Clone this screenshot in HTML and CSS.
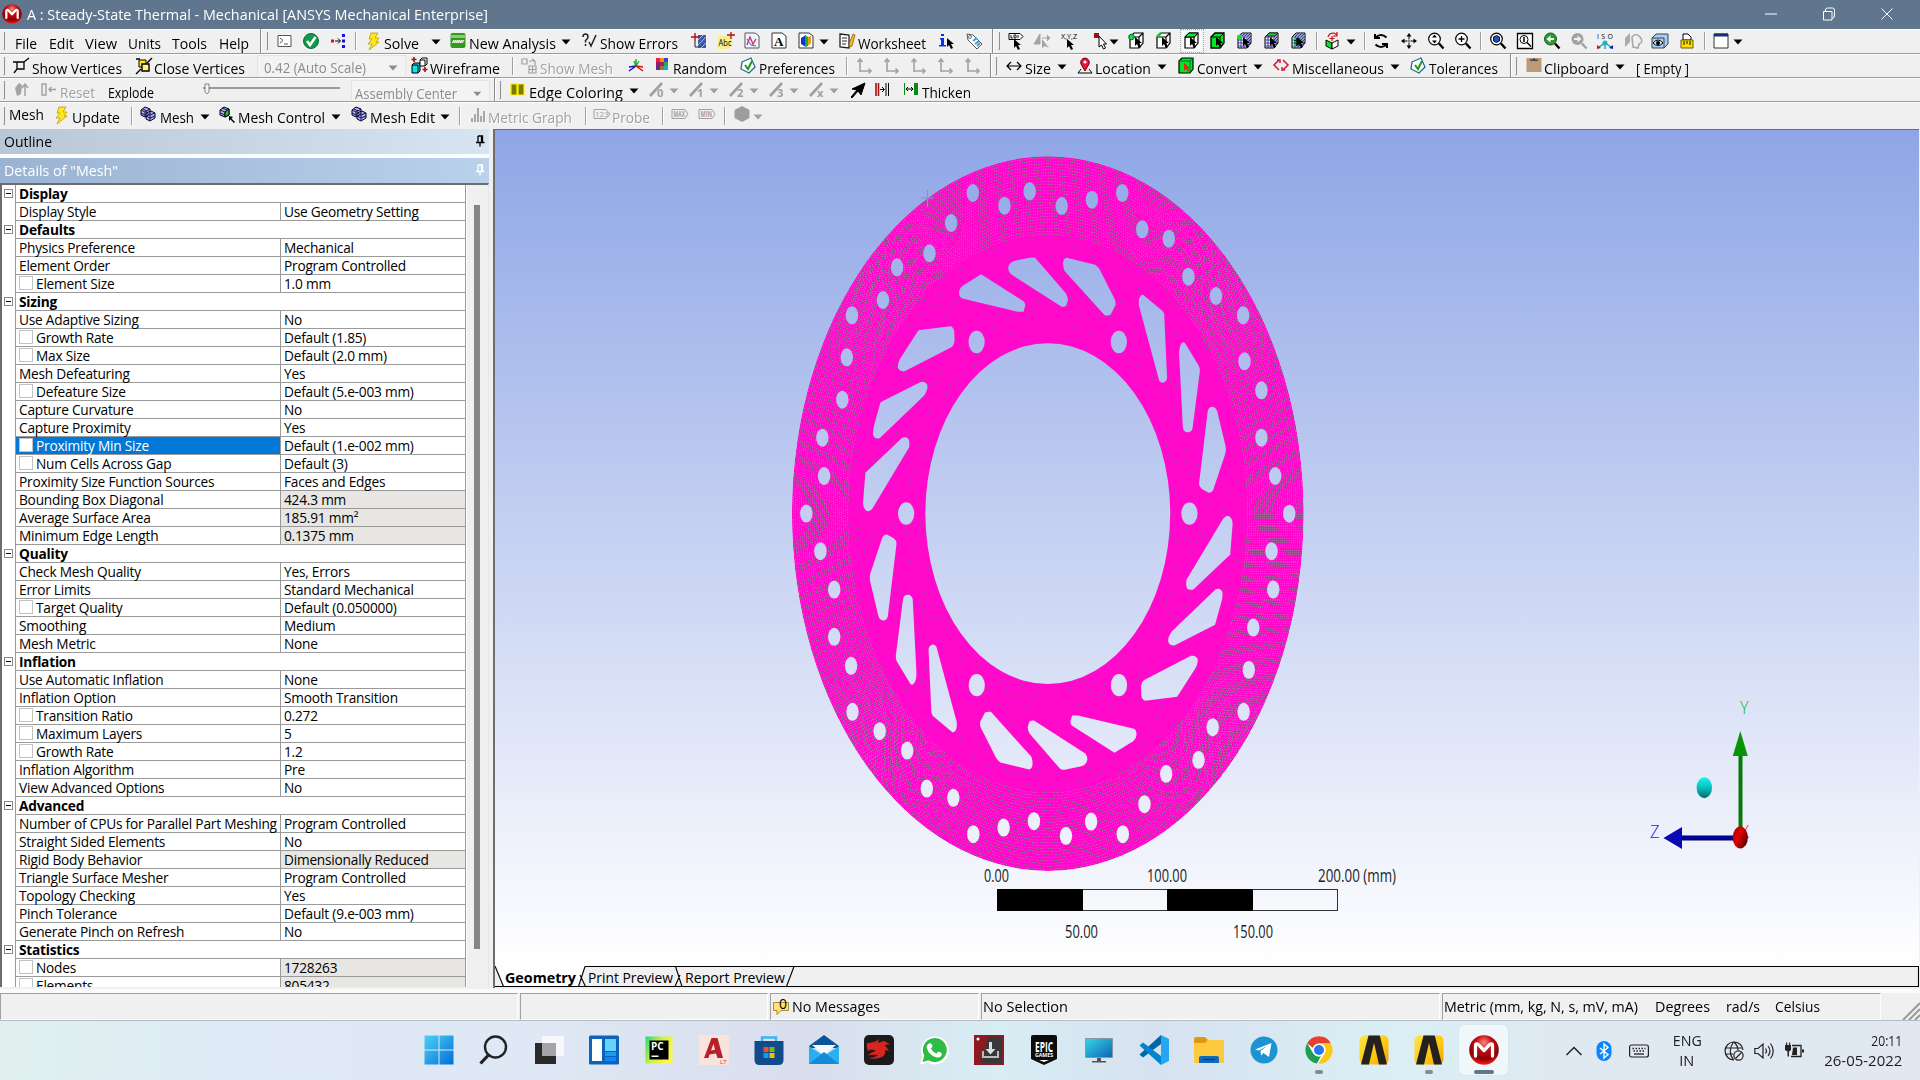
FILE: index.html
```html
<!DOCTYPE html>
<html lang="en">
<head>
<meta charset="utf-8">
<title>A : Steady-State Thermal - Mechanical [ANSYS Mechanical Enterprise]</title>
<link rel="stylesheet" href="styles.css">
</head>
<body>
<svg class="defs" width="0" height="0">
  <defs>
    <radialGradient id="redball" cx=".5" cy=".25" r=".75"><stop offset="0" stop-color="#ff8a80"/><stop offset=".35" stop-color="#c40d12"/><stop offset=".75" stop-color="#8d0005"/><stop offset="1" stop-color="#ff1a1a"/></radialGradient>
    <linearGradient id="ansysbg" x1="0" y1="0" x2="1" y2="1"><stop offset="0" stop-color="#ffe34a"/><stop offset=".6" stop-color="#fdc80c"/><stop offset="1" stop-color="#f59a13"/></linearGradient>
    <symbol id="caret" viewBox="0 0 12 20"><path d="M1.500 7.500h9L6 12.500z"/></symbol>
    <symbol id="bolt" viewBox="0 0 20 20"><path d="M7 2h7l-3 5h4l-3 4h3L5 19l3-6H4l4-5H5z" fill="#ffe81a" stroke="#c29a00" stroke-width=".8"/></symbol>
    <symbol id="cube" viewBox="0 0 20 20"><path d="M3 6l4-4h9v10l-4 5H3z" fill="#fff" stroke="#000" stroke-width="1.200"/><path d="M3 6h9v11M12 6l4-4" fill="none" stroke="#000" stroke-width="1.200"/></symbol>
    <symbol id="cursor" viewBox="0 0 20 20"><path d="M8 6v9l2-2 2 4 2-1-2-4h3z" fill="#000"/></symbol>
    <symbol id="gridcube" viewBox="0 0 20 20"><path d="M3 6l4-4h9v10l-4 5H3z" fill="#e8e8ff" stroke="#000"/><path d="M3 9h9l4-4M3 12h9l4-4M3 15h9l4-4M5 4h9v10M6 6v11M9 6v11M12 6v11M3 6h9l4-4M6 6l4-4M9 6l4-4" stroke="#22228a" fill="none" stroke-width=".8"/></symbol>
    <symbol id="lens" viewBox="0 0 20 20"><circle cx="8.500" cy="8" r="5.800" fill="#fff" stroke="#000" stroke-width="1.200"/><path d="M13 12.500l4.500 5" stroke="#000" stroke-width="2.400"/></symbol>
    <symbol id="meshcube" viewBox="0 0 20 20"><path d="M3 5l4-3 5 2v5l-5 3-4-2zM8 8l5-2 4 2v5l-5 3-4-2z" fill="#aeb2ff" stroke="#000"/><path d="M3 5l4 2v5M7 7l5-3M8 8l4 2 5-2M12 10v6M5 4l4 2M3 8l4 2M8 11l4 2 5-2" fill="none" stroke="#121250"/></symbol>
    <symbol id="axes" viewBox="0 0 20 20"><path d="M6 3v13M3.500 6L6 3l2.500 3M6 15h11M14.500 12.500L17 15l-2.500 2.500" fill="none" stroke="#a3a3a3" stroke-width="1.600"/></symbol>
    <symbol id="tick" viewBox="0 0 20 20"><path d="M4 6l9-4 4 9-6 6-8-4z" fill="#fff" stroke="#2a6a92" stroke-width="1.300"/><path d="M7 9l3 4 4-8" fill="none" stroke="#16a016" stroke-width="2"/></symbol>
    <symbol id="slash" viewBox="0 0 20 20"><path d="M3 16L15 3" stroke="#a0a0a0" stroke-width="2.600"/></symbol>
    <symbol id="pin" viewBox="0 0 10 12"><path d="M3 1h4.500v6M3 1v6M1 7.500h8.500M5 8v3.500M6.500 1v6" fill="none" stroke="currentColor" stroke-width="1.300"/></symbol>
    <symbol id="mball" viewBox="0 0 30 30"><circle cx="15" cy="15" r="14.800" fill="url(#redball)"/><path d="M6.500 21V10.500c0-2 2.200-2 3.200-.6L15 15.500l5.300-5.600c1-1.400 3.200-1.400 3.200.6V21" fill="none" stroke="#fff" stroke-width="3.300" stroke-linecap="round" stroke-linejoin="round"/></symbol>
    <symbol id="ansys" viewBox="0 0 30 30"><rect x=".5" y=".5" width="29" height="29" rx="5" fill="url(#ansysbg)"/><path d="M9.500.5h11.300L28 29.500h-8L15 8 10 29.500H2z" fill="#25211e"/></symbol>
  </defs>
</svg>
<div class="window">
  <header class="titlebar">
    <svg class="logo" viewBox="0 0 30 30"><use href="#mball"/></svg>
    <span class="t caption" data-w="461">A : Steady-State Thermal - Mechanical [ANSYS Mechanical Enterprise]</span>
    <span class="sysbuttons">
      <svg viewBox="0 0 14 14"><path d="M1 7h12"/></svg>
      <svg viewBox="0 0 14 14"><path d="M1.500 4.500h8.500v8.500H1.500zM3.500 4.500V3q0-2 2-2h5q2 0 2 2v6q0 2-2 2"/></svg>
      <svg viewBox="0 0 14 14"><path d="M1.500 1.500l11 11M12.500 1.500l-11 11"/></svg>
    </span>
  </header>

  <nav class="bar bar-menu">
    <i class="grip"></i>
    <span class="t" data-w="22">File</span><span class="t" data-w="25">Edit</span><span class="t" data-w="32">View</span><span class="t" data-w="33">Units</span><span class="t" data-w="35">Tools</span><span class="t" data-w="30">Help</span>
    <i class="end"></i><i class="grip"></i>
    <svg class="i" viewBox="0 0 20 20"><path d="M4 4.500h13v11H4z" fill="#fff" stroke="#555"/><path d="M6 7l3 2.500L6 12M10 13h4" fill="none" stroke="#555"/></svg>
    <svg class="i" viewBox="0 0 20 20"><circle cx="10" cy="10" r="7.500" fill="#12994a" stroke="#0b6e33"/><path d="M6 10l3 4 5.500-8" fill="none" stroke="#fff" stroke-width="2.500"/></svg>
    <svg class="i" viewBox="0 0 20 20"><path d="M3 8.500h3v3H3z" fill="#e01010"/><path d="M7 10h5M10 7.500l2.500 2.500-2.500 2.500" stroke="#000" fill="none"/><path d="M14 3h3v3h-3zM14 8.500h3v3h-3zM14 14h3v3h-3z" fill="#1212e0"/></svg>
    <i class="sep"></i>
    <svg class="i"><use href="#bolt"/></svg><span class="t" data-w="35">Solve</span><svg class="c"><use href="#caret"/></svg>
    <svg class="i" viewBox="0 0 20 20"><rect x="2.500" y="2" width="15" height="15" rx="2" fill="#2f9a1c"/><path d="M3 4h14v3H3z" fill="#8dcc6a"/><path d="M4 12l2-3v3l2-3v3l2-3v3l2-3v3l2-3v3l2-3" stroke="#fff" fill="none"/></svg>
    <span class="t" data-w="87">New Analysis</span><svg class="c"><use href="#caret"/></svg>
    <svg class="i" viewBox="0 0 20 20"><path d="M3 6q0-3 2.500-3T8 6q0 1.500-2.500 3.500v2M5.500 13v2M9 11l2 4 5-11" fill="none" stroke="#222" stroke-width="1.500"/></svg>
    <span class="t" data-w="78">Show Errors</span>
    <svg class="i" viewBox="0 0 20 20"><path d="M9 4h8v13H9z" fill="#3c5aa8"/><path d="M9 9l5-5M9 14l8-8M12 17l5-5" stroke="#a9bce8"/><path d="M2 6h9M6 2v8" stroke="#b01010" stroke-width="1.400"/><path d="M6 10v6h3" stroke="#222" fill="none"/></svg>
    <svg class="i" viewBox="0 0 20 20"><path d="M2 5h14v9l-4 4H2z" fill="#f8ef8c"/><text x="2.500" y="14.500" font-size="9" textLength="13" lengthAdjust="spacingAndGlyphs">Abc</text><path d="M11 4h8M15 1v7" stroke="#b01010" stroke-width="1.300"/></svg>
    <svg class="i" viewBox="0 0 20 20"><path d="M3 2h10l4 3v12H3z" fill="#f4f4ff" stroke="#556"/><path d="M5 14L8 6l3 7 3-5" stroke="#c03060" fill="none" stroke-width="1.300"/><path d="M5 8l4 6 5 1" stroke="#5050c0" fill="none"/></svg>
    <svg class="i" viewBox="0 0 20 20"><path d="M3 2h10l4 3v12H3z" fill="#fff" stroke="#333"/><text x="5" y="14.500" class="serif" font-size="13" font-weight="bold">A</text></svg>
    <svg class="i" viewBox="0 0 20 20"><path d="M3 2h10l4 3v12H3z" fill="#fff" stroke="#333"/><path d="M5 7l5-3v12l-5-3z" fill="#1430d0"/><path d="M9 4l3 2v9l-3 1z" fill="#14b030"/><path d="M12 6l3-1v7l-3 3z" fill="#e0a010"/></svg>
    <svg class="c low"><use href="#caret"/></svg>
    <svg class="i" viewBox="0 0 20 20"><path d="M3 3l9 1v13l-9-1z" fill="#fff" stroke="#222" stroke-width="1.300"/><path d="M5 7h5M5 10h5M5 13h4" stroke="#222"/><path d="M12 13l4-10 2 1-3 11-2 1z" fill="#f2c118" stroke="#7a4a00" stroke-width=".7"/></svg>
    <span class="t" data-w="68">Worksheet</span>
    <svg class="i" viewBox="0 0 20 20"><path d="M4 3h3v2H4zM3 7h4v7h2v1.500H2V14h2V8.500H3z" fill="#0b30e8"/><use href="#cursor" x="2" y="1"/></svg>
    <svg class="i" viewBox="0 0 20 20"><path d="M3 3l6 1 9 9-5 5-9-9z" fill="#fff" stroke="#555"/><circle cx="6" cy="6" r="1.500" fill="none" stroke="#777"/><path d="M9 10l4-3M11 13l4-3M13 15l3-3" stroke="#39a0dd" stroke-width="2"/></svg>
    <i class="end"></i><i class="grip"></i>
    <svg class="i" viewBox="0 0 20 20"><path d="M3 2.500h11l3 3-3 3H3z" fill="#fff" stroke="#000"/><path d="M5 4v3h2M8 4h2v3H8zM12 4v3" fill="none" stroke="#000" stroke-width=".9"/><use href="#cursor" y="2"/></svg>
    <svg class="i" viewBox="0 0 20 20"><path d="M2 13L8 3v10zM10 7h8M15 4l3 3-3 3" fill="#a4a4a4" stroke="#a4a4a4"/><path d="M10 8v9l3-2 4 2z" fill="#a4a4a4"/></svg>
    <svg class="i" viewBox="0 0 20 20"><text x="2" y="8" font-size="7" textLength="16" lengthAdjust="spacingAndGlyphs">X,Y,Z</text><use href="#cursor" y="2"/></svg>
    <svg class="i" viewBox="0 0 20 20"><path d="M4 2h5v5H4z" fill="#9e1010"/><path d="M9 5v11l2.500-2 2 4 2-1-2-4h3z" fill="#fff" stroke="#000"/></svg>
    <svg class="c"><use href="#caret"/></svg>
    <svg class="i" viewBox="0 0 20 20"><use href="#cube"/><circle cx="4.500" cy="6" r="2.800" fill="#19d93b" stroke="#064"/><use href="#cursor"/></svg>
    <svg class="i" viewBox="0 0 20 20"><use href="#cube"/><path d="M3 6l4-4" stroke="#10c52e" stroke-width="2.500"/><use href="#cursor"/></svg>
    <svg class="i pressed" viewBox="0 0 20 20"><use href="#cube"/><path d="M3 6l4-4h9l-4 4z" fill="#00f230" stroke="#000"/><use href="#cursor"/></svg>
    <svg class="i" viewBox="0 0 20 20"><path d="M3 6l4-4h9v10l-4 5H3z" fill="#00e81e" stroke="#000" stroke-width="1.300"/><path d="M3 6h9v11M12 6l4-4" fill="none" stroke="#000"/><use href="#cursor"/></svg>
    <svg class="i" viewBox="0 0 20 20"><use href="#gridcube"/><circle cx="4.500" cy="6" r="2.500" fill="#19d93b"/><use href="#cursor"/></svg>
    <svg class="i" viewBox="0 0 20 20"><use href="#gridcube"/><path d="M4 5l3-3h9l-3 3z" fill="#28c838" stroke="#000" stroke-width=".7"/><use href="#cursor"/></svg>
    <svg class="i" viewBox="0 0 20 20"><use href="#gridcube"/><path d="M5 7h7v8H5z" fill="#22d040"/><path d="M5 9.500h7M5 12h7M7.500 7v8M10 7v8" stroke="#033"/><use href="#cursor"/></svg>
    <i class="sep"></i>
    <svg class="i" viewBox="0 0 20 20"><path d="M3 9l6 3v6l-6-3z" fill="#0ce02c" stroke="#000"/><path d="M9 12l6-3v6l-6 3z" fill="#fff" stroke="#000"/><path d="M5 6q1-4 6-4l3 2M14 1v4h-4M9 5v5M6.500 7.500h5" fill="none" stroke="#c01010" stroke-width="1.200"/></svg>
    <svg class="c"><use href="#caret"/></svg><i class="sep"></i>
    <svg class="i" viewBox="0 0 20 20"><path d="M4 3v4h5M4.500 6.500q5.500-5 11 0M16 17v-4h-5M15.500 13.500q-5.500 5-11 0" fill="none" stroke="#000" stroke-width="2"/></svg>
    <svg class="i" viewBox="0 0 20 20"><path d="M10 4v12M4 10h12" stroke="#000" stroke-dasharray="4.500 1 1 1 5"/><path d="M10 2l2.500 3.500h-5zM10 18l2.500-3.500h-5zM2 10l3.500-2.500v5zM18 10l-3.500-2.500v5z"/></svg>
    <svg class="i" viewBox="0 0 20 20"><use href="#lens"/><path d="M8.500 3.500l2.500 3H6zM8.500 12.500l2.500-3H6z"/></svg>
    <svg class="i" viewBox="0 0 20 20"><use href="#lens"/><path d="M8.500 5v6M5.500 8h6" stroke="#000" stroke-width="1.300"/></svg>
    <i class="sep"></i>
    <svg class="i" viewBox="0 0 20 20"><use href="#lens"/><path d="M5.500 6l3-1.500 3 1.500v4l-3 1.500-3-1.500z" fill="#2b4fc0" stroke="#012"/></svg>
    <svg class="i" viewBox="0 0 20 20"><path d="M2.500 2.500h15v15h-15z" fill="#fff" stroke="#000" stroke-width="1.300"/><circle cx="9" cy="8.500" r="4" fill="none" stroke="#000"/><path d="M12 11.500l4 4M9 6v5" stroke="#000" stroke-width="1.500"/></svg>
    <svg class="i" viewBox="0 0 20 20"><path d="M13 12.500l4.500 5" stroke="#000" stroke-width="2.400"/><circle cx="8.500" cy="8" r="6" fill="#2d9a2d" stroke="#185a18"/><path d="M4.500 8l4-3.500V7H12v2H8.500v2.500z" fill="#fff"/></svg>
    <svg class="i" viewBox="0 0 20 20"><path d="M13 12.500l4.500 5" stroke="#a0a0a0" stroke-width="2.400"/><circle cx="8.500" cy="8" r="6" fill="#a0a0a0"/><path d="M12.500 8l-4-3.500V7H5v2h3.500v2.500z" fill="#f0f0f0"/></svg>
    <svg class="i" viewBox="0 0 20 20"><text x="2" y="8" font-size="7" textLength="16">ISO</text><path d="M10 10v8M10 12l-6 4M10 12l6 4" stroke="#0aa0b0" stroke-width="1.300"/><circle cx="10" cy="12" r="2.500" fill="#18b4c0"/><path d="M2 14l4 3-4 1z" fill="#c01010"/><path d="M18 14l-4 3 4 1z" fill="#1010c0"/></svg>
    <svg class="i" viewBox="0 0 20 20"><path d="M2 16V7l5-5v9z" fill="#aaa"/><path d="M9 6q4-5 8 0t-1 7l-1 4-5-1z" fill="none" stroke="#a8a8a8" stroke-width="1.600"/></svg>
    <svg class="i" viewBox="0 0 20 20"><path d="M2 7l4-4h12v10l-4 4H2z" fill="#a8cdf2" stroke="#345"/><path d="M2 7h12v10" fill="none" stroke="#345"/><path d="M3 12q5-6 10 0-5 5-10 0z" fill="#dfe8f0" stroke="#000"/><circle cx="8" cy="12" r="2"/></svg>
    <svg class="i" viewBox="0 0 20 20"><path d="M6 7V3h5l3 3v3H6z" fill="#fff" stroke="#000"/><path d="M4 9h12v8H4z" fill="#ffe000" stroke="#6a5a00"/><path d="M7 10v4M10 10v3M13 10v4" stroke="#000"/></svg>
    <i class="sep"></i>
    <svg class="i" viewBox="0 0 20 20"><path d="M3 3h14v14H3z" fill="#fff" stroke="#333"/><path d="M3 2.500h14v3H3z" fill="#12306e"/></svg>
    <svg class="c"><use href="#caret"/></svg>
  </nav>

  <nav class="bar bar-vertices">
    <i class="grip"></i>
    <svg class="i" viewBox="0 0 20 20"><path d="M6 6h7v7H6zM3 17l3-4M13 6l5-4M2 6h4" fill="none" stroke="#000" stroke-width="1.300"/></svg>
    <span class="t" data-w="90">Show Vertices</span>
    <svg class="i" viewBox="0 0 20 20"><path d="M5 4h7v7H5z" fill="#ffe90a" stroke="#000"/><path d="M8 8h7v7H8z" fill="#fff489" stroke="#000" stroke-width="1.400"/><path d="M2 18l5-5M13 7l5-5M2 3h4" stroke="#000" stroke-width="1.400"/></svg>
    <span class="t" data-w="91">Close Vertices</span>
    <span class="combo scale"><span class="t" data-w="102">0.42 (Auto Scale)</span><svg class="c"><use href="#caret"/></svg></span>
    <svg class="i" viewBox="0 0 20 20"><path d="M2 9l2-2h6v8l-2 2H2z" fill="#15e0e8" stroke="#000"/><path d="M2 9h6v8" stroke="#000" fill="none"/><path d="M10 4l2-2h5v6l-2 2h-5zM10 4h5v6" fill="#fff" stroke="#000"/><path d="M4 1v5M1.500 3.500h5M15 11v5M12.500 13.500h5" stroke="#b00e0e" stroke-width="1.600"/></svg>
    <span class="t" data-w="70">Wireframe</span><i class="sep"></i>
    <svg class="i off" viewBox="0 0 20 20"><path d="M3 3h5v5H3zM10 5h6M13 3l3 2v4M10 10h7v7h-7zM10 13.500h7M13.500 10v7" fill="none" stroke="#a0a0a0" stroke-width="1.200"/></svg>
    <span class="t off" data-w="73">Show Mesh</span>
    <svg class="i" viewBox="0 0 20 20"><path d="M10 10V3M10 10l-2-5M10 10l3-5" stroke="#1cae2c" stroke-width="1.400"/><path d="M10 10l7 5M10 10l7 1" stroke="#d01414" stroke-width="1.500"/><path d="M10 10l-7 5M10 10l-7 1" stroke="#1414c0" stroke-width="1.500"/></svg>
    <svg class="i" viewBox="0 0 20 20"><path d="M4 2h4v4H4z" fill="#e22a2a"/><path d="M8 2h4v4H8z" fill="#ff8a10"/><path d="M12 2h4v4h-4z" fill="#4040d8"/><path d="M4 6h4v4H4z" fill="#a01080"/><path d="M8 6h4v4H8z" fill="#b02050"/><path d="M12 6h4v4h-4z" fill="#20b040"/><path d="M4 10h4v4H4z" fill="#603080"/><path d="M8 10h4v4H8z" fill="#a07040"/><path d="M12 10h4v4h-4z" fill="#10b0c0"/></svg>
    <span class="t" data-w="54">Random</span>
    <svg class="i"><use href="#tick"/></svg><span class="t" data-w="76">Preferences</span><i class="sep"></i>
    <svg class="i"><use href="#axes"/></svg><svg class="i"><use href="#axes"/></svg><svg class="i"><use href="#axes"/></svg><svg class="i"><use href="#axes"/></svg><svg class="i"><use href="#axes"/></svg>
    <i class="end"></i><i class="grip"></i>
    <svg class="i" viewBox="0 0 20 20"><path d="M3 10h14M7 6l-4 4 4 4M13 6l4 4-4 4" fill="none" stroke="#000" stroke-width="1.200"/></svg>
    <span class="t" data-w="26">Size</span><svg class="c"><use href="#caret"/></svg>
    <svg class="i" viewBox="0 0 20 20"><path d="M10 15L6 8a4.300 4.300 0 1 1 8 0z" fill="#e0183a" stroke="#700"/><circle cx="10" cy="6" r="1.600" fill="#fff"/><path d="M6 13l-3 4h14l-3-4" fill="none" stroke="#000"/></svg>
    <span class="t" data-w="56">Location</span><svg class="c"><use href="#caret"/></svg>
    <svg class="i" viewBox="0 0 20 20"><path d="M3 5l3-3h11v11l-3 4H3z" fill="#00e81e" stroke="#000" stroke-width="1.200"/><path d="M3 5h11v12M14 5l3-3" fill="none" stroke="#064"/><path d="M8 7v8l2-2 2 3 1-1-1-3h2z" fill="#e82020"/></svg>
    <span class="t" data-w="50">Convert</span><svg class="c"><use href="#caret"/></svg>
    <svg class="i" viewBox="0 0 20 20"><path d="M8 4L3 9l5 5M6 4h3v3M12 4l5 5-5 5M14 14h-3v-3" fill="none" stroke="#d81c3c" stroke-width="1.600"/></svg>
    <span class="t" data-w="92">Miscellaneous</span><svg class="c"><use href="#caret"/></svg>
    <svg class="i"><use href="#tick"/></svg><span class="t" data-w="69">Tolerances</span>
    <i class="end"></i><i class="grip"></i>
    <svg class="i" viewBox="0 0 20 20"><path d="M2.500 2h15v14h-15z" fill="#bd9a77"/><path d="M6 5V3.500h2.500q1.500-3 3 0H14V5z" fill="#444"/></svg>
    <span class="t" data-w="65">Clipboard</span><svg class="c"><use href="#caret"/></svg><span class="t" data-w="53">[ Empty ]</span>
  </nav>

  <nav class="bar bar-explode">
    <i class="grip"></i>
    <svg class="i" viewBox="0 0 20 20"><path d="M4 8l4-5 3 2-1 9-4 2z" fill="#a3a3a3"/><path d="M14 16V5M11 8l3-4 3 4" stroke="#a3a3a3" fill="none" stroke-width="1.500"/></svg>
    <svg class="i" viewBox="0 0 20 20"><path d="M4 4h4v11H4zM11 9.500h7M13.500 7L11 9.500l2.500 2.500" fill="none" stroke="#a0a0a0" stroke-width="1.400"/></svg>
    <span class="t off" data-w="35">Reset</span><span class="t" data-w="46">Explode</span>
    <svg class="slider" viewBox="0 0 137 20"><path d="M0 7h137v2H0z" fill="#9b9b9b"/><path d="M2 4h4v8l-2 2-2-2z" fill="#f5f5f5" stroke="#666" stroke-width=".8"/></svg>
    <span class="combo center"><span class="t" data-w="102">Assembly Center</span><svg class="c"><use href="#caret"/></svg></span>
    <i class="end"></i><i class="grip"></i>
    <svg class="i" viewBox="0 0 20 20"><path d="M3 4h6v11H3zM10 4h6v11h-6z" fill="#7d7a00" stroke="#ffee00" stroke-width="1.200"/></svg>
    <span class="t" data-w="94">Edge Coloring</span><svg class="c"><use href="#caret"/></svg>
    <svg class="i slash" viewBox="0 0 20 20"><use href="#slash"/><text x="10" y="17">0</text></svg><svg class="c off"><use href="#caret"/></svg>
    <svg class="i slash" viewBox="0 0 20 20"><use href="#slash"/><text x="10" y="17">1</text></svg><svg class="c off"><use href="#caret"/></svg>
    <svg class="i slash" viewBox="0 0 20 20"><use href="#slash"/><text x="10" y="17">2</text></svg><svg class="c off"><use href="#caret"/></svg>
    <svg class="i slash" viewBox="0 0 20 20"><use href="#slash"/><text x="10" y="17">3</text></svg><svg class="c off"><use href="#caret"/></svg>
    <svg class="i slash" viewBox="0 0 20 20"><use href="#slash"/><text x="10" y="17">x</text></svg><svg class="c off"><use href="#caret"/></svg>
    <svg class="i" viewBox="0 0 20 20"><path d="M3 17l6-7-5-1 13-6-4 12-3-4-6 7z" stroke="#000"/></svg>
    <svg class="i" viewBox="0 0 20 20"><path d="M4 3v13M6.500 3v13" stroke="#a01414" stroke-width="1.600"/><path d="M14 3v13M16.500 3v13M8 9.500h4M10 7l2.500 2.500L10 12" stroke="#000" fill="none"/></svg>
    <svg class="i" viewBox="0 0 20 20"><path d="M3.500 3v12" stroke="#0a8a1a"/><path d="M13 3h4v12h-4z" fill="#0a8a1a"/><path d="M5 9h7M7 7L5 9l2 2M10 7l2 2-2 2" fill="none" stroke="#000"/></svg>
    <span class="t" data-w="49">Thicken</span>
  </nav>

  <nav class="bar bar-mesh">
    <i class="grip"></i><span class="t" data-w="35">Mesh</span>
    <svg class="i"><use href="#bolt"/></svg><span class="t low" data-w="48">Update</span><i class="sep"></i>
    <svg class="i"><use href="#meshcube"/></svg><span class="t low" data-w="34">Mesh</span><svg class="c"><use href="#caret"/></svg>
    <svg class="i" viewBox="0 0 20 20"><path d="M3 5l4-3 5 2v6l-4 2-5-2z" fill="#aeb2ff" stroke="#000"/><path d="M3 5l5 2v5M8 7l4-3M3 8l5 2 4-3M5 3l5 2v6" fill="none" stroke="#123"/><path d="M8 7l4-3v6l-4 2z" fill="#22c53a" stroke="#000"/><path d="M12 11v5l1.500-1.500L17 18l1-1-3.500-3.500L16 12z" fill="#000"/></svg>
    <span class="t low" data-w="87">Mesh Control</span><svg class="c"><use href="#caret"/></svg>
    <svg class="i"><use href="#meshcube"/></svg><span class="t low" data-w="65">Mesh Edit</span><svg class="c"><use href="#caret"/></svg><i class="sep"></i>
    <svg class="i" viewBox="0 0 20 20"><path d="M4 13v4M7 9v8M10 3v14M13 11v6M16 6v11" stroke="#a0a0a0" stroke-width="1.800"/></svg>
    <span class="t off low" data-w="84">Metric Graph</span><i class="sep"></i>
    <svg class="i off" viewBox="0 0 20 20"><path d="M2 4.500h12l4 4.500-4 4.500H2z" fill="none" stroke="#a0a0a0"/><text x="3" y="12" font-size="8">123</text></svg>
    <span class="t off low" data-w="38">Probe</span><i class="sep"></i>
    <svg class="i off" viewBox="0 0 20 20"><path d="M2 4.500h13l3 4.500-3 4.500H2z" fill="none" stroke="#a0a0a0"/><text x="3.500" y="12" font-size="8" font-weight="bold" textLength="11.500" lengthAdjust="spacingAndGlyphs">MAX</text></svg>
    <svg class="i off" viewBox="0 0 20 20"><path d="M2 4.500h13l3 4.500-3 4.500H2z" fill="none" stroke="#a0a0a0"/><text x="3.500" y="12" font-size="8" font-weight="bold" textLength="11.500" lengthAdjust="spacingAndGlyphs">MIN</text></svg>
    <i class="sep"></i>
    <svg class="i" viewBox="0 0 20 20"><path d="M10 1l7.500 4v8L10 17 2.500 13V5z" fill="#9d9d9d"/></svg><svg class="c off"><use href="#caret"/></svg>
  </nav>

  <main class="work">
    <aside class="side">
      <h2 class="pane outline"><span class="t" data-w="48">Outline</span><svg class="pin"><use href="#pin"/></svg></h2>
      <h2 class="pane details"><span class="t" data-w="114">Details of "Mesh"</span><svg class="pin"><use href="#pin"/></svg></h2>
      <div class="sheet">
        <div class="rows">
          <div class="row head"><i class="tog"></i><b>Display</b></div>
          <div class="row"><span>Display Style</span><span>Use Geometry Setting</span></div>
          <div class="row head"><i class="tog"></i><b>Defaults</b></div>
          <div class="row"><span>Physics Preference</span><span>Mechanical</span></div>
          <div class="row"><span>Element Order</span><span>Program Controlled</span></div>
          <div class="row chk"><span>Element Size</span><span>1.0 mm</span></div>
          <div class="row head"><i class="tog"></i><b>Sizing</b></div>
          <div class="row"><span>Use Adaptive Sizing</span><span>No</span></div>
          <div class="row chk"><span>Growth Rate</span><span>Default (1.85)</span></div>
          <div class="row chk"><span>Max Size</span><span>Default (2.0 mm)</span></div>
          <div class="row"><span>Mesh Defeaturing</span><span>Yes</span></div>
          <div class="row chk"><span>Defeature Size</span><span>Default (5.e-003 mm)</span></div>
          <div class="row"><span>Capture Curvature</span><span>No</span></div>
          <div class="row"><span>Capture Proximity</span><span>Yes</span></div>
          <div class="row chk selected"><span>Proximity Min Size</span><span>Default (1.e-002 mm)</span></div>
          <div class="row chk"><span>Num Cells Across Gap</span><span>Default (3)</span></div>
          <div class="row"><span>Proximity Size Function Sources</span><span>Faces and Edges</span></div>
          <div class="row fixed"><span>Bounding Box Diagonal</span><span>424.3 mm</span></div>
          <div class="row fixed"><span>Average Surface Area</span><span>185.91 mm²</span></div>
          <div class="row fixed"><span>Minimum Edge Length</span><span>0.1375 mm</span></div>
          <div class="row head"><i class="tog"></i><b>Quality</b></div>
          <div class="row"><span>Check Mesh Quality</span><span>Yes, Errors</span></div>
          <div class="row"><span>Error Limits</span><span>Standard Mechanical</span></div>
          <div class="row chk"><span>Target Quality</span><span>Default (0.050000)</span></div>
          <div class="row"><span>Smoothing</span><span>Medium</span></div>
          <div class="row"><span>Mesh Metric</span><span>None</span></div>
          <div class="row head"><i class="tog"></i><b>Inflation</b></div>
          <div class="row"><span>Use Automatic Inflation</span><span>None</span></div>
          <div class="row"><span>Inflation Option</span><span>Smooth Transition</span></div>
          <div class="row chk"><span>Transition Ratio</span><span>0.272</span></div>
          <div class="row chk"><span>Maximum Layers</span><span>5</span></div>
          <div class="row chk"><span>Growth Rate</span><span>1.2</span></div>
          <div class="row"><span>Inflation Algorithm</span><span>Pre</span></div>
          <div class="row"><span>View Advanced Options</span><span>No</span></div>
          <div class="row head"><i class="tog"></i><b>Advanced</b></div>
          <div class="row"><span>Number of CPUs for Parallel Part Meshing</span><span>Program Controlled</span></div>
          <div class="row"><span>Straight Sided Elements</span><span>No</span></div>
          <div class="row fixed"><span>Rigid Body Behavior</span><span>Dimensionally Reduced</span></div>
          <div class="row"><span>Triangle Surface Mesher</span><span>Program Controlled</span></div>
          <div class="row"><span>Topology Checking</span><span>Yes</span></div>
          <div class="row"><span>Pinch Tolerance</span><span>Default (9.e-003 mm)</span></div>
          <div class="row"><span>Generate Pinch on Refresh</span><span>No</span></div>
          <div class="row head"><i class="tog"></i><b>Statistics</b></div>
          <div class="row chk fixed"><span>Nodes</span><span>1728263</span></div>
          <div class="row chk fixed"><span>Elements</span><span>805432</span></div>
        </div>
        <div class="gutter"><div class="thumb"></div></div>
      </div>
    </aside>

    <section class="view">
      <svg class="scene" viewBox="495 130 1424 836">
        <defs>
          <pattern id="specks" width="41" height="39" patternUnits="userSpaceOnUse">
            <path d="M3 4h1v1H3zM14 2h1v1h-1zM24 7h1v1h-1zM35 3h1v1h-1zM8 14h1v1H8zM18 17h1v1h-1zM31 15h1v1h-1zM38 21h1v1h-1zM4 25h1v1H4zM13 29h1v1h-1zM22 27h1v1h-1zM28 33h1v1h-1zM36 31h1v1h-1zM17 36h1v1h-1zM7 35h1v1H7zM26 22h1v1h-1z" fill="#96509a"/>
          </pattern>
          <radialGradient id="diag"><stop offset="0" stop-color="#fff"/><stop offset=".4" stop-color="#aaa"/><stop offset="1" stop-color="#000"/></radialGradient>
          <mask id="corners" maskUnits="userSpaceOnUse" x="780" y="140" width="540" height="740">
            <ellipse cx="880" cy="270" rx="110" ry="120" fill="url(#diag)"/><ellipse cx="1216" cy="270" rx="110" ry="120" fill="url(#diag)"/>
            <ellipse cx="880" cy="757" rx="110" ry="120" fill="url(#diag)"/><ellipse cx="1216" cy="757" rx="110" ry="120" fill="url(#diag)"/>
          </mask>
          <g id="cut">
            <g>
              <path d="M520 460q0-14 10-22l54-35 123 81q6 6 5 14l-5 17H690L527 475q-7-4-7-15z"/>
              <path d="M663 382q2-14 17-19l45-10q12-2 17 2l88 105q6 10 6 20l-5 18q-6 3-13 2L670 402q-8-8-7-20z"/>
              <path d="M822 370q0-14 10-17l83 21q8 5 13 14l44 90q4 10 2 18l-14 28q-9 4-17 2L826 392q-4-8-4-22z"/>
              <path d="M1042 482q2-16 12-18l58 50q4 6 4 16l8 183q-2 14-13 15-10-1-12-15l-57-218z"/>
              <path d="M1159 640q1-28 12-33l5 2 40 68q4 8 3 18l-21 170q-2 12-14 12-11 0-14-14z"/>
              <path d="M1242 815q2-14 12-15 12 0 16 15l24 104q2 10-1 22l-35 109q-6 10-13 8l-21-12q-7-6-7-16z"/>
              <path d="M342 682q0-12 6-24l54-87 93-12q10 4 11 16l1 27q-2 14-8 19L362 694q-16 2-20-12z"/>
              <path d="M270 882q0-16 5-32l17-63 118-62q16 0 18 12t-10 30L290 894q-16 6-20-12z"/>
              <path d="M241 1090l7-92 107-105q14-3 18 4t2 25L268 1106q-8 9-14 8-12-5-13-24z"/>
            </g>
            <g id="holes"></g>
          </g>
          <mask id="discmask" maskUnits="userSpaceOnUse" x="0" y="0" width="1560" height="2250">
            <ellipse cx="777.700" cy="1120.800" rx="743" ry="1072" fill="#fff"/>
            <ellipse cx="777.700" cy="1120.800" rx="355.500" ry="511" fill="#000"/>
            <use href="#cut"/><use href="#cut" transform="rotate(180 777.700 1120.800)"/>
          </mask>
          <linearGradient id="cyl" x1="0" x2="0" y1="0" y2="1"><stop offset="0" stop-color="#00005a"/><stop offset=".45" stop-color="#0000c8"/><stop offset="1" stop-color="#000050"/></linearGradient>
          <linearGradient id="cyan" x1="0" x2="0" y1="0" y2="1"><stop offset="0" stop-color="#18f2f0"/><stop offset=".5" stop-color="#08c0c0"/><stop offset="1" stop-color="#056a6a"/></linearGradient>
          <linearGradient id="redg" x1="0" x2="1" y1="0" y2=".6"><stop offset="0" stop-color="#a00000"/><stop offset=".5" stop-color="#e00000"/><stop offset="1" stop-color="#600000"/></linearGradient>
        </defs>
        <g transform="translate(780 140) scale(.34435 .33333)">
          <g mask="url(#discmask)">
            <ellipse cx="777.700" cy="1120.800" rx="743" ry="1072" fill="#ff0acb"/>
            <g transform="scale(2.904 3) translate(-780 -140)">
              <g id="rings" class="rings"></g>
              <g mask="url(#corners)"><g id="rings2" class="rings dense"></g></g>
              <ellipse cx="1047.800" cy="513.600" rx="199" ry="276.500" fill="#ff0acb"/>
              <ellipse cx="1047.800" cy="513.600" rx="199" ry="276.500" fill="url(#specks)"/>
            </g>
          </g>
        </g>
        <path d="M921 198h13M927.500 190v17" stroke="#7f93dc"/>
        <g class="ruler">
          <rect x="997.500" y="889.500" width="340" height="21" fill="none" stroke="#333"/>
          <path d="M997 889h86v22h-86zM1167 889h86v22h-86z"/>
          <text x="984" y="882" textLength="25" lengthAdjust="spacingAndGlyphs">0.00</text>
          <text x="1147" y="882" textLength="40" lengthAdjust="spacingAndGlyphs">100.00</text>
          <text x="1318" y="882" textLength="78" lengthAdjust="spacingAndGlyphs">200.00 (mm)</text>
          <text x="1065" y="937.500" textLength="33" lengthAdjust="spacingAndGlyphs">50.00</text>
          <text x="1233" y="937.500" textLength="40" lengthAdjust="spacingAndGlyphs">150.00</text>
        </g>
        <g class="triad">
          <text x="1740" y="713.500" fill="#12b312" textLength="8.500" lengthAdjust="spacingAndGlyphs">Y</text>
          <path d="M1738.500 752h4v78h-4z" fill="#087808"/><path d="M1740.300 731l7.500 25h-15z" fill="#089408"/>
          <path d="M1681 835.500h54v5h-54z" fill="url(#cyl)"/><path d="M1663.500 838l18.500-11v22z" fill="#0808b4"/>
          <text x="1650" y="837.500" fill="#1c1cff" textLength="9.500" lengthAdjust="spacingAndGlyphs">Z</text>
          <text x="1740.500" y="838" fill="#f01010" textLength="8.500" lengthAdjust="spacingAndGlyphs">X</text>
          <ellipse cx="1740.300" cy="837.500" rx="7.600" ry="11" fill="url(#redg)"/>
          <ellipse cx="1704.300" cy="787.700" rx="7.700" ry="10.500" fill="url(#cyan)"/>
        </g>
      </svg>
      <svg class="tabs" viewBox="495 966 1424 21">
        <path d="M495 966h90l-7 20h-74z" fill="#fff"/>
        <path d="M495 966l8.500 20.500M585 966.500l-6.500 20M580 975l5.500 11.500M675.500 966.500l6.500 20M680 975l-5 11.500M794 966.500l-7.500 20M585 966.500h1333.500v20H495" fill="none" stroke="#000" stroke-width="1.100"/>
        <text x="505" y="983" font-weight="bold" textLength="71" lengthAdjust="spacingAndGlyphs">Geometry</text>
        <text x="588" y="983" textLength="85" lengthAdjust="spacingAndGlyphs">Print Preview</text>
        <text x="685" y="983" textLength="100" lengthAdjust="spacingAndGlyphs">Report Preview</text>
      </svg>
    </section>
  </main>

  <footer class="status">
    <div></div><div></div>
    <div><svg class="msg" viewBox="0 0 18 18"><path d="M1.500 5.500h15v8H9l-4 4v-4H1.500z" fill="#ffe37a" stroke="#b08a28"/><text x="7" y="12" font-size="14">0</text></svg><span class="t" data-w="88">No Messages</span></div>
    <div><span class="t" data-w="85">No Selection</span></div>
    <div class="units"><span class="t" data-w="194">Metric (mm, kg, N, s, mV, mA)</span><span class="t" data-w="55">Degrees</span><span class="t" data-w="34">rad/s</span><span class="t" data-w="45">Celsius</span></div>
    <svg class="sizer" viewBox="0 0 18 18"><path d="M1 18L18 1M7 18L18 7M13 18l5-5" stroke="#999" stroke-width="2"/></svg>
  </footer>
</div>

<footer class="taskbar">
  <div class="apps">
    <a><svg viewBox="0 0 30 30"><linearGradient id="w" x1="0" y1="0" x2="1" y2="1"><stop offset="0" stop-color="#4fd0fb"/><stop offset="1" stop-color="#0070d4"/></linearGradient><path d="M.5.500h14v14H.5zM15.500.500h14v14h-14zM.5 15.500h14v14H.5zM15.500 15.500h14v14h-14z" fill="url(#w)"/></svg></a>
    <a><svg viewBox="0 0 30 30"><circle cx="16.500" cy="12" r="10.500" fill="none" stroke="#222" stroke-width="2.400"/><path d="M9.500 20l-8 8.500" stroke="#222" stroke-width="3.200"/></svg></a>
    <a><svg viewBox="0 0 30 30"><path d="M1 8h21v21H1z" fill="#2a2a2a"/><path d="M8 1h22v20H8z" fill="#fff" fill-opacity=".72"/><path d="M8 8h14v13H8z" fill="#999" fill-opacity=".7"/></svg></a>
    <a><svg viewBox="0 0 30 30"><rect width="30" height="29" y=".5" rx="1.500" fill="#0c63b8"/><path d="M3 4h10v22H3z" fill="#fff"/><path d="M16 4h11v12H16z" fill="#66d4ff"/><path d="M16 17h11v4H16z" fill="#1c9af0"/><path d="M16 22h11v4H16z" fill="#0c85ff"/></svg></a>
    <a><svg viewBox="0 0 30 30"><linearGradient id="pc" x1="0" y1="0" x2="1" y2=".5"><stop offset="0" stop-color="#21d789"/><stop offset=".5" stop-color="#c8f040"/><stop offset="1" stop-color="#fcf84a"/></linearGradient><path d="M1.500 1.500h27v27h-27z" fill="url(#pc)"/><path d="M5.500 5.500h19v19h-19z"/><text x="7" y="14.500" fill="#fff" font-size="10" font-weight="bold">PC</text><path d="M7.500 20.500h7v1.500h-7z" fill="#fff"/></svg></a>
    <a><svg viewBox="0 0 30 30"><path d="M0 0h30v30H0z" fill="#f9e3dc"/><path d="M5 23L12.500 3h6L24 23h-5.500l-1.500-4.500-6.500 1L9.500 23zM12 15.500l4-.8-1.500-6z" fill="#b8202a"/><text x="21" y="28.500" fill="#d03040" font-size="6">LT</text></svg></a>
    <a><svg viewBox="0 0 30 30"><path d="M8 7V2.500h14V7" fill="none" stroke="#35b8f1" stroke-width="2.500"/><path d="M.5 6h29v19q0 5-5 5h-19q-5 0-5-5z" fill="#134b8a"/><path d="M9.500 12h5v5h-5z" fill="#f25022"/><path d="M15.500 12h5v5h-5z" fill="#7fba00"/><path d="M9.500 18h5v5h-5z" fill="#00a4ef"/><path d="M15.500 18h5v5h-5z" fill="#ffb900"/></svg></a>
    <a><svg viewBox="0 0 30 30"><path d="M0 11L15 0l15 11v2H0z" fill="#0a539c"/><path d="M3 10h24L15 20z" fill="#f4f8fc"/><path d="M0 11l15 10 15-10v18H0z" fill="#28b0ef"/><path d="M0 29l15-12 15 12z" fill="#148bd8"/></svg></a>
    <a><svg viewBox="0 0 30 30"><rect width="30" height="30" rx="5" fill="#1d1a1c"/><path d="M3 8q8 0 12-4l-1 4 6-2 6 3-5 1 4 6-4-1q1 5-3 7-6 3-14 1 7 0 10-3-7-1-11 1 4-4 9-5-5-3-8 0-2-4-1-8z" fill="#d8261f"/></svg></a>
    <a><svg viewBox="0 0 30 30"><path d="M1 29.500l2.500-8A14 14 0 1 1 9 27.500z" fill="#fff"/><path d="M3.500 27l1.800-6.200A12 12 0 1 1 9.500 25.200z" fill="#2dbc45"/><path d="M10 8.500q3-1 3.500 3l-1.500 2q2 4 5.500 5l2-2q3 .5 3.500 2.500-1 4-5 3.500-8-2-10-9-1-3 2-5z" fill="#fff"/></svg></a>
    <a><svg viewBox="0 0 30 30"><path d="M0 0h30v30H0z" fill="#8c1a22"/><path d="M14 2h14v26H7z" fill="#38383a"/><circle cx="4" cy="4" r="1.500" fill="#fff"/><path d="M15 7h3v7h3.500l-5 5.500-5-5.500H15z" fill="#ddd"/><path d="M9 16v6h15v-6" fill="none" stroke="#bbb" stroke-width="2"/></svg></a>
    <a><svg viewBox="0 0 30 30"><path d="M2 1.500Q2 0 4 0h22q2 0 2 1.500V24L15 30 2 24z" fill="#0c0c0c"/><text x="6" y="16.500" fill="#fff" font-size="15" font-weight="bold" textLength="18" lengthAdjust="spacingAndGlyphs">EPIC</text><text x="6" y="22" fill="#fff" font-size="5" font-weight="bold" textLength="18" lengthAdjust="spacingAndGlyphs">GAMES</text><path d="M10 25h10l-5 2z" fill="#fff"/></svg></a>
    <a><svg viewBox="0 0 30 30"><linearGradient id="mon" x1="0" y1="0" x2="1" y2="1"><stop offset="0" stop-color="#34d8e4"/><stop offset="1" stop-color="#0f62b8"/></linearGradient><path d="M1.500 3.500h27v19h-27z" fill="url(#mon)" stroke="#8a98a5"/><path d="M13 23h4v3h5v1.500H8V26h5z" fill="#555"/></svg></a>
    <a><svg viewBox="0 0 30 30"><path d="M22 0v9L4 22.500l-3.500-3z" fill="#0065a9"/><path d="M.5 10.500l3.500-3L22 21v9z" fill="#0084d0"/><path d="M22 0l8 4v22l-8 4z" fill="#27a5f0"/></svg></a>
    <a><svg viewBox="0 0 30 30"><path d="M0 3.500Q0 2 2 2h9l3 3-3 4H0z" fill="#dd9a0a"/><path d="M0 8h11l3-3h14.500q1.500 0 1.500 1.500V28H0z" fill="#fdc93e"/><path d="M5 28v-5q0-2 2-2h16q2 0 2 2v5z" fill="#0f6cbd"/><path d="M9 24.500h12" stroke="#0a3f80" stroke-width="1.500"/></svg></a>
    <a><svg viewBox="0 0 30 30"><circle cx="15" cy="15" r="13.500" fill="#1c94d2"/><path d="M6 14.500L22.500 8 20 22l-5.500-4-2.500 2.500-.5-4.500 7-5.500-8.500 5z" fill="#fff"/></svg></a>
    <a class="open"><svg viewBox="0 0 30 30"><circle cx="15" cy="15" r="13.700" fill="#fff"/><path d="M3.100 8.200A13.700 13.700 0 0 1 27 8.500H15a6.500 6.500 0 0 0-6 4.500z" fill="#e3402f"/><path d="M3.100 8.200L9.300 18.500A6.500 6.500 0 0 0 17 21l-4 7.500A13.700 13.700 0 0 1 3.100 8.200z" fill="#1e9e50"/><path d="M27 8.500H16A6.500 6.500 0 0 1 20.600 18.500L14 28.700A13.700 13.700 0 0 0 27 8.500z" fill="#fbc816"/><circle cx="15" cy="15" r="6.300" fill="#fff"/><circle cx="15" cy="15" r="5" fill="#2b74ea"/></svg></a>
    <a><svg><use href="#ansys"/></svg></a>
    <a class="open"><svg><use href="#ansys"/></svg></a>
    <a class="active"><svg><use href="#mball"/></svg></a>
  </div>
  <div class="tray">
    <svg viewBox="0 0 20 20"><path d="M2.500 14L10 6.500l7.500 7.500" fill="none" stroke="#222" stroke-width="1.500"/></svg>
    <svg viewBox="0 0 20 20"><rect x="2.500" width="15" height="20" rx="7.500" fill="#0b86ff"/><path d="M6 7l8 6.500L10 17V3l4 3.500L6 13" fill="none" stroke="#fff" stroke-width="1.400"/></svg>
    <svg viewBox="0 0 20 20"><rect x=".6" y="4" width="18.800" height="12" rx="2" fill="none" stroke="#222" stroke-width="1.200"/><path d="M3.500 7.500h13M4.500 10h12" stroke="#222" stroke-width="1.300" stroke-dasharray="1.500 1.500"/><path d="M5 13h10" stroke="#222" stroke-width="1.300"/></svg>
    <div class="lang"><span class="t" data-w="29">ENG</span><span class="t" data-w="15">IN</span></div>
    <svg viewBox="0 0 20 20"><path d="M10 19A9 9 0 1 1 19 9M1 7h17M1 13h8M9.500 1Q3 10 9.500 19M10 1q4 4 4 8" fill="none" stroke="#222" stroke-width="1.200"/><circle cx="14.500" cy="14.500" r="4.600" fill="#e3e9f2" stroke="#222" stroke-width="1.200"/><path d="M11.500 17.500l6-6" stroke="#222" stroke-width="1.200"/></svg>
    <svg viewBox="0 0 20 20"><path d="M.8 7.500H4L9 3v14L4 12.500H.8zM11.500 7.500q2 2.500 0 5M14 5q4 5 0 10M16.500 2.500q5.500 7.500 0 15" fill="none" stroke="#222" stroke-width="1.200"/></svg>
    <svg viewBox="0 0 20 20"><path d="M8 4.500h9v11H7" fill="none" stroke="#222" stroke-width="1.300"/><path d="M9 6.500h4v7.500H8z" fill="#222"/><path d="M18 8.500h2v3h-2zM1 4h6v5l-2 1.500v5H3.500v-5L1 9zM2 1.500h1.200V4H2zM5 1.500h1.200V4H5z" fill="#222"/></svg>
    <div class="clock"><span class="t right" data-w="31">20:11</span><span class="t right" data-w="78">26-05-2022</span></div>
  </div>
</footer>
<script src="app.js"></script>
</body>
</html>
```
FILE: styles.css
```css
* { box-sizing: border-box; }
body { margin: 0; width: 1920px; height: 1080px; overflow: hidden; background: #f0f0f0; color: #000; font: 15px/20px "Open Sans", "Noto Sans", sans-serif; }
.defs { display: block; }
svg text { font-family: "Open Sans", "Noto Sans", sans-serif; }
svg text.serif { font-family: "Liberation Serif", serif; }
.window { display: flex; flex-direction: column; height: 1021px; border-bottom: 1px solid #b4bcc4; }
.t { display: block; white-space: nowrap; justify-self: start; transform-origin: 0 50%; }
.t.right { transform-origin: 100% 50%; }

.titlebar { display: flex; align-items: center; height: 29px; background: #60768f; color: #fff; padding: 0 0 1px 2px; }
.logo { width: 20px; height: 20px; margin-right: 5px; }
.caption { width: 600px; flex: none; }
.sysbuttons { display: flex; gap: 44px; margin-left: auto; padding-right: 26px; }
.sysbuttons svg { width: 14px; height: 14px; fill: none; stroke: #fff; }

.bar { display: grid; grid-auto-flow: column; align-items: center; padding-left: 3px; background: #f0f0f0; border-bottom: 1px solid #9a9a9a; box-shadow: inset 0 1px #fff; overflow: hidden; }
.bar > * { min-width: 0; }
.bar > .t { margin-top: 3px; }
.bar .i { width: 20px; height: 20px; }
.bar .c { width: 12px; height: 20px; margin-top: 2px; }
.bar-menu { height: 25px; grid-template-columns: 12px 34px 36px 43px 44px 47px 41px 6px 8px 27px 27px 27px 9px 20px 46px 18px 21px 91px 20px 20px 89px 27px 26px 27px 27px 22px 19px 21px 79px 27px 28px 6px 8px 26px 27px 31px 18px 19px 27px 28px 26px 27px 27px 27px 27px 7px 22px 19px 7px 28px 27px 27px 27px 8px 27px 27px 27px 26px 28px 27px 27px 27px 7px 21px 12px; }
.bar-vertices { height: 24px; grid-template-columns: 8px 21px 102px 20px 104px 152px 20px 82px 7px 21px 86px 26px 21px 65px 21px 87px 8px 27px 27px 27px 27px 28px 5px 9px 21px 31px 19px 20px 61px 20px 21px 55px 19px 21px 97px 19px 21px 81px 5px 9px 20px 70px 22px auto; }
.bar-explode { height: 24px; grid-template-columns: 8px 27px 22px 48px 95px 149px 142px 5px 9px 21px 99px 19px 21px 19px 21px 19px 21px 19px 21px 19px 21px 20px 24px 29px 21px auto; }
.bar-mesh { height: 27px; grid-template-columns: 6px 43px 20px 59px 7px 22px 39px 18px 21px 92px 19px 21px 69px 20px 9px 20px 97px 7px 20px 50px 8px 27px 27px 8px 20px auto; border-bottom: 0; }
.bar-mesh > .t { margin-top: -3px; }
.bar-mesh > .t.low { margin-top: 3px; }
.bar-vertices > .i, .bar-mesh > .i { margin-bottom: 1px; }
.grip { width: 2px; height: 18px; border-right: 1px solid #8f8f8f; border-bottom: 1px solid #bbb; }
.sep { width: 2px; height: 18px; border-left: 1px solid #a0a0a0; border-right: 1px solid #fff; }
.end { width: 2px; height: 24px; border-left: 1px solid #8a8a8a; border-right: 1px solid #fff; }
.t.off { color: #a0a0a0; text-shadow: 1px 1px #fff; }
.c.off { fill: #a0a0a0; }
.i.off text, .slash text { fill: #a0a0a0; }
.slash text { font-size: 11px; font-weight: bold; }
.bar .pressed { background: #fafafa; outline: 1px dotted #aaa; outline-offset: 1px; }
.combo { display: flex; align-items: center; height: 21px; background: #f3f3f3; box-shadow: 0 0 0 1px #e4e4e4; color: #8c8c8c; line-height: 18px; }
.combo .c { margin-left: auto; fill: #8c8c8c; }
.combo.scale { width: 147px; padding: 2px 6px 0; }
.combo.center { width: 137px; padding: 2px 6px 0 3px; align-self: end; }
.slider { width: 137px; height: 20px; }

.work { display: flex; height: 863px; }
.side { display: flex; flex-direction: column; width: 489px; margin-right: 4px; height: 858px; }
.pane { display: flex; align-items: center; justify-content: space-between; margin: 0 0 4px; height: 25px; padding: 0 4px 1px; font: inherit; background: linear-gradient(90deg, #b8c7d6, #d7e4f2); }
.pane.details { margin: 0; color: #fff; background: linear-gradient(90deg, #9ab3d2, #bad1ec); }
.pin { width: 10px; height: 12px; }
.outline { box-shadow: 0 4px #fbfcfd; }
.sheet { display: flex; flex: 1; min-height: 0; overflow: hidden; border: solid #6c6c6c; border-width: 2px 0 0 2px; border-right: 1px solid #e6e6e6; background: #fff; }
.rows { width: 464px; font-size: 13.700px; line-height: 17px; letter-spacing: -.22px; overflow: hidden; flex: none; }
.row { position: relative; display: grid; grid-template-columns: 264px 185px; margin-left: 13px; height: 18px; border: solid #9a9a9a; border-width: 0 1px 1px; }
.row > span { padding-left: 3px; white-space: nowrap; height: 17px; }
.row > span + span { border-left: 1px solid #9a9a9a; }
.row.chk > span:first-child::before { content: ""; display: inline-block; width: 12px; height: 12px; margin-right: 3px; border: 1px solid #c2c2c2; background: #fff; vertical-align: -1px; }
.row.fixed > span + span { background: #e7e6e2; }
.row.selected > span:first-child { background: #0078d7; color: #fff; }
.row.head b { padding-left: 3px; }
.tog { position: absolute; left: -12px; top: 4px; width: 9px; height: 9px; border: 1px solid #8a8a8a; background: linear-gradient(#000, #000) center / 5px 1px no-repeat #fff; }
.gutter { flex: 1; background: #f0f0f0; padding: 20px 0 0 7px; margin-left: 1px; }
.thumb { width: 6px; height: 744px; background: #858585; }

.view { width: 1426px; height: 859px; border-left: 2px solid #6e6e6e; border-top: 1px solid #6e6e6e; }
.scene { display: block; width: 1424px; height: 836px; background: linear-gradient(#8fa6e6, #fff); }
.rings { fill: none; stroke: #ad63a3; stroke-width: 1; stroke-dasharray: 1.100 1.300; shape-rendering: crispEdges; }
.rings.dense { stroke: #a078a0; stroke-dasharray: 1.500 1.900; }
#specks { shape-rendering: crispEdges; }
.tabs { display: block; width: 1424px; height: 21px; background: #f0f0f0; }
.tabs text { font-size: 15px; }
.ruler text { font-size: 18.500px; fill: #222; }
.triad text { font-size: 18px; font-weight: 300; }

.status { display: grid; grid-template-columns: 520px 250px 211px 461px 439px 1fr; height: 27px; box-shadow: 0 -4px #fbfbfb; background: #f0f0f0; margin-top: auto; }
.status > div { display: flex; align-items: center; margin-right: 2px; border: 1px solid; border-color: #a0a0a0 #fff #fff #a0a0a0; padding: 0 0 2px 1px; }
.msg { width: 18px; height: 18px; margin-right: 2px; }
.status .units { display: grid; grid-template-columns: 211px 71px 49px auto; margin: 0; }
.sizer { width: 18px; height: 18px; align-self: end; justify-self: end; }

.taskbar { display: flex; height: 59px; background: linear-gradient(90deg, #e0f0ee 0, #deeaf6 12%, #dfe8f4 28%, #d9deec 42%, #d8edf4 52%, #d7e2f0 60%, #daeff5 73%, #e0e8f1 82%, #e1e8f1 100%); }
.apps { display: flex; margin-left: 411px; width: 1100px; }
.apps a { display: flex; flex-direction: column; align-items: center; width: 55px; padding-top: 14px; }
.apps svg { width: 30px; height: 30px; }
.apps .open::after, .apps .active::after { content: ""; width: 8px; height: 4px; border-radius: 2px; background: #858b90; margin-top: 5px; }
.apps .active { width: 49px; height: 50px; margin: 4px 3px 0; padding-top: 10px; border-radius: 5px; background: #eff7fa; box-shadow: 0 0 1px #b8c4cc; }
.apps .active::after { width: 20px; background: #60788f; }
.tray { display: grid; grid-template-columns: 30px 35px 33px 62px 30px 30px 30px 88px; margin-left: 53px; align-items: center; }
.tray svg { width: 20px; height: 20px; }
.lang { display: flex; flex-direction: column; align-items: center; padding-right: 12px; }
.lang .t { transform-origin: 50% 50%; }
.lang, .clock { color: #1c1c1c; margin-top: -2px; }
.clock { display: flex; flex-direction: column; align-items: flex-end; }
```
FILE: app.js
```js
// Squeeze or stretch each label to its designed width.
function fitLabels() {
  document.querySelectorAll('.t[data-w]').forEach(function (el) {
    var range = document.createRange();
    range.selectNodeContents(el);
    var w = range.getBoundingClientRect().width;
    if (w) el.style.transform = 'scaleX(' + (el.dataset.w / w).toFixed(4) + ')';
  });
}

function ellipse(parent, cx, cy, rx, ry) {
  var e = document.createElementNS('http://www.w3.org/2000/svg', 'ellipse');
  e.setAttribute('cx', cx);
  e.setAttribute('cy', cy);
  e.setAttribute('rx', rx);
  e.setAttribute('ry', ry);
  document.getElementById(parent).appendChild(e);
}

// Drilled holes of one half of the disc; the other half is its 180 degree copy.
var small = [[560,159],[652,197],[725,154],[818,198],[906,179],[994,159],[1052,268],[1129,296],
  [1186,410],[1266,468],[1345,526],[1349,664],[1398,751],[1398,893],[1438,1008],[1479,1121],
  [497,249],[434,340],[340,382],[299,480],[209,526],[194,652],[181,779],[123,893],[128,1008]];
var bolts = [[571,606],[984,606],[1189,1121]];
small.forEach(function (p) { ellipse('holes', p[0], p[1], 18, 27); });
bolts.forEach(function (p) { ellipse('holes', p[0], p[1], 23.5, 33.5); });

// Element edges of the outer band: concentric rows of dashes.
for (var rx = 200; rx < 256; rx += 2.1) {
  ellipse('rings', 1047.8, 513.6, rx, rx * 1.3965);
  ellipse('rings2', 1047.8, 513.6, rx + 1, (rx + 1) * 1.3965);
}
fitLabels();
```
